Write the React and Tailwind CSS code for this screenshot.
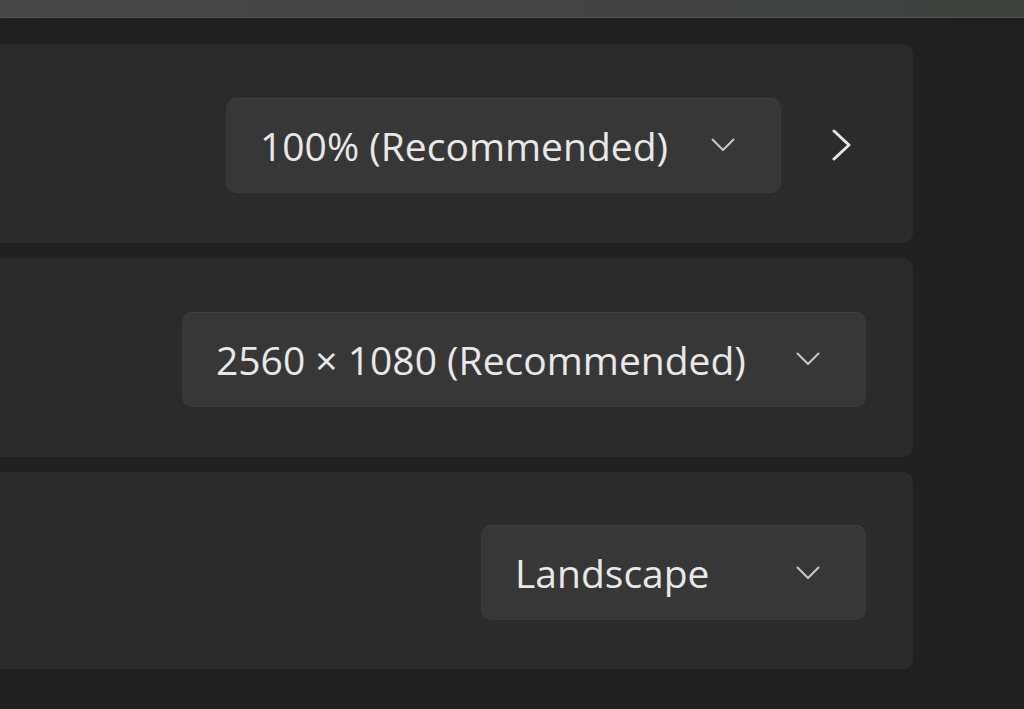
import React from "react";

const ChevronDown = () => (
  <svg width="24" height="14" viewBox="0 0 24 14" fill="none" className="shrink-0">
    <path d="M1.5 1.5 L12 12 L22.5 1.5" stroke="#c8c8c8" strokeWidth="2" strokeLinecap="round" strokeLinejoin="round" />
  </svg>
);

const ChevronRight = () => (
  <svg width="22" height="32" viewBox="0 0 22 32" fill="none" className="shrink-0">
    <path d="M3 2 L18 16 L3 30" stroke="#e6e6e6" strokeWidth="3" strokeLinecap="round" strokeLinejoin="round" />
  </svg>
);

const Dropdown = ({ label, minW }) => (
  <div
    className={`h-[95px] ${minW} rounded-[10px] bg-[#373737] border border-[#3a3a3a] border-t-[#414141] flex items-center justify-between pl-[33px] pr-[45px] gap-[40px]`}
  >
    <span className="text-[39px] text-[#e8e8e8] leading-none whitespace-nowrap" style={{ fontFamily: '"Open Sans", "Noto Sans", sans-serif' }}>
      {label}
    </span>
    <ChevronDown />
  </div>
);

export default function App() {
  return (
    <div className="w-[1024px] h-[709px] bg-[#202020] overflow-hidden flex flex-col">
      <div className="h-[18px] shrink-0 bg-gradient-to-r from-[#474747] via-[#444444] to-[#3b433c] border-b border-[#505050]" />
      <div className="flex flex-col gap-[15px] pt-[26px] w-[913px]">
        <div className="h-[199px] rounded-r-[10px] bg-[#2b2b2b] flex items-center justify-end pt-[3px] pr-[60px] gap-[50px]">
          <Dropdown label="100% (Recommended)" minW="w-[555px]" />
          <ChevronRight />
        </div>
        <div className="h-[199px] rounded-r-[10px] bg-[#2b2b2b] flex items-center justify-end pt-[3px] pr-[47px]">
          <Dropdown label="2560 × 1080 (Recommended)" minW="w-[684px]" />
        </div>
        <div className="h-[197px] rounded-r-[10px] bg-[#2b2b2b] flex items-center justify-end pt-[4px] pr-[47px]">
          <Dropdown label="Landscape" minW="w-[385px]" />
        </div>
      </div>
    </div>
  );
}
